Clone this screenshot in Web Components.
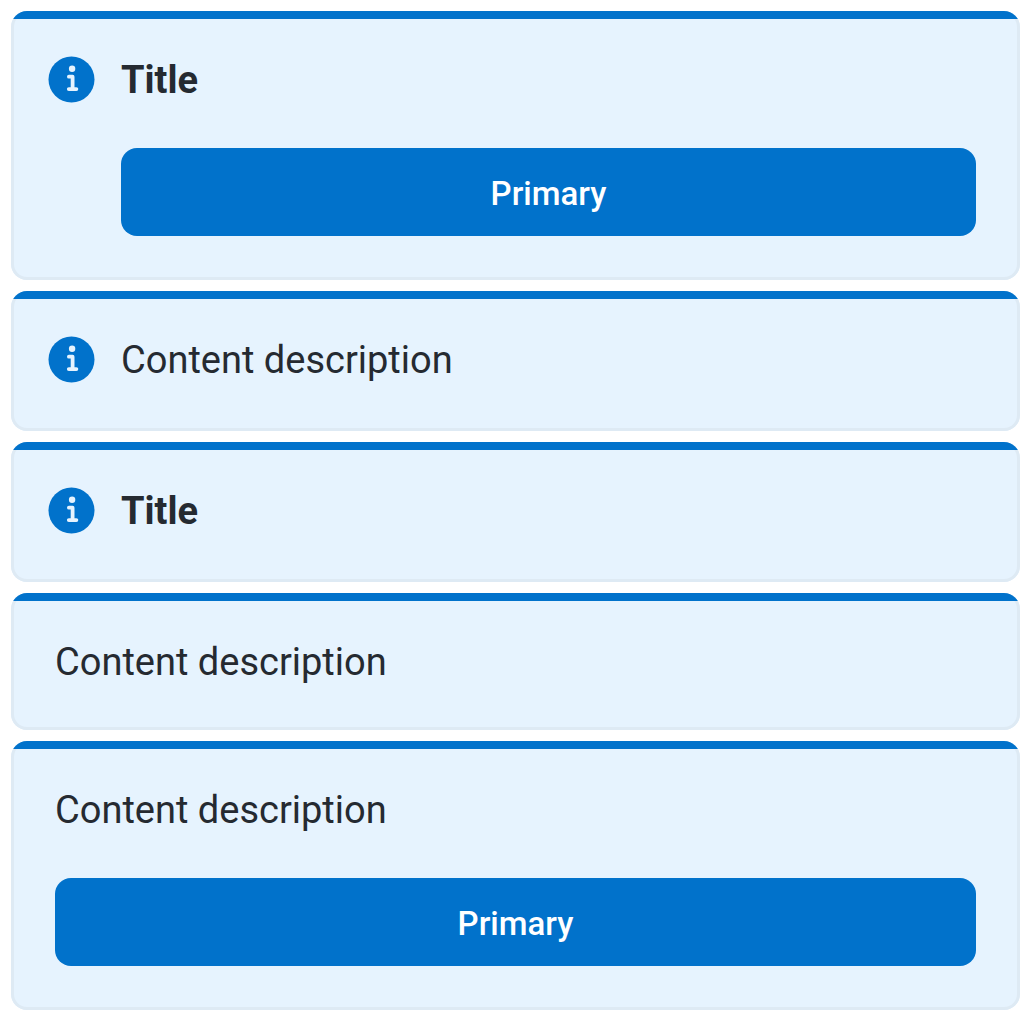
<!DOCTYPE html>
<html lang="en">
<head>
<meta charset="utf-8">
<meta name="viewport" content="width=device-width, initial-scale=1">
<title>Info messages</title>
<style>
  body {
    margin: 0;
    background: #fff;
    font-family: Roboto, "Liberation Sans", sans-serif;
    color: #252a31;
  }
</style>
</head>
<body>
<alert-list>
  <info-alert icon heading="Title"><primary-button slot="action">Primary</primary-button></info-alert>
  <info-alert icon>Content description</info-alert>
  <info-alert icon heading="Title"></info-alert>
  <info-alert>Content description</info-alert>
  <info-alert>Content description<primary-button slot="action">Primary</primary-button></info-alert>
</alert-list>

<template id="alert-list">
  <style>
    :host { display: flex; flex-direction: column; gap: 11px; padding: 11px; }
  </style>
  <slot></slot>
</template>

<template id="info-icon">
  <style>
    :host { display: block; flex: none; width: 55px; height: 55px; }
    svg { display: block; width: 100%; height: 100%; }
  </style>
  <svg viewBox="0 0 55 55" aria-hidden="true">
    <circle cx="27.5" cy="27.5" r="23" fill="#0172cb"/>
    <circle cx="28.1" cy="16.8" r="3.2" fill="#e6f3fe"/>
    <path d="M24.9 24.7H28.6V37.1M24.8 37.1H32.4" fill="none" stroke="#e6f3fe" stroke-width="3.8" stroke-linecap="round" stroke-linejoin="round"/>
  </svg>
</template>

<template id="primary-button">
  <style>
    :host { display: block; }
    button {
      display: block; width: 100%; height: 88px; margin: 0; padding: 4px 33px 0;
      border: 0; border-radius: 16px; background: #0172cb; color: #fff;
      font: 500 33px/44px Roboto, "Liberation Sans", sans-serif; cursor: pointer;
    }
  </style>
  <button type="button"><slot></slot></button>
</template>

<template id="info-alert">
  <style>
    :host {
      display: block; overflow: hidden; border-radius: 16px;
      background: #e6f3fe; box-shadow: inset 0 0 0 3px #deeaf4;
    }
    .strip { height: 8px; background: #0172cb; }
    .row { display: flex; align-items: flex-start; gap: 22px; padding: 33px 44px 44px; }
    :host([icon]) .row { padding-left: 33px; }
    .body { flex: 1; min-width: 0; display: flex; flex-direction: column; gap: 44px; }
    .text { padding-top: 4px; font-size: 38px; line-height: 48px; }
    h2.text { margin: 0; font-weight: 700; }
  </style>
  <div class="strip"></div>
  <div class="row">
    <div class="body">
      <div class="text"><slot></slot></div>
      <slot name="action"></slot>
    </div>
  </div>
</template>

<script>
  function stamp(host, id) {
    const root = host.attachShadow({ mode: "open" });
    root.append(document.getElementById(id).content.cloneNode(true));
    return root;
  }

  for (const name of ["alert-list", "info-icon", "primary-button"]) {
    customElements.define(name, class extends HTMLElement {
      constructor() { super(); stamp(this, name); }
    });
  }

  customElements.define("info-alert", class extends HTMLElement {
    constructor() {
      super();
      const root = stamp(this, "info-alert");
      if (this.hasAttribute("icon")) {
        root.querySelector(".row").prepend(document.createElement("info-icon"));
      }
      if (this.hasAttribute("heading")) {
        const title = document.createElement("h2");
        title.className = "text";
        title.textContent = this.getAttribute("heading");
        root.querySelector(".text").replaceWith(title);
      }
    }
  });
</script>
</body>
</html>
